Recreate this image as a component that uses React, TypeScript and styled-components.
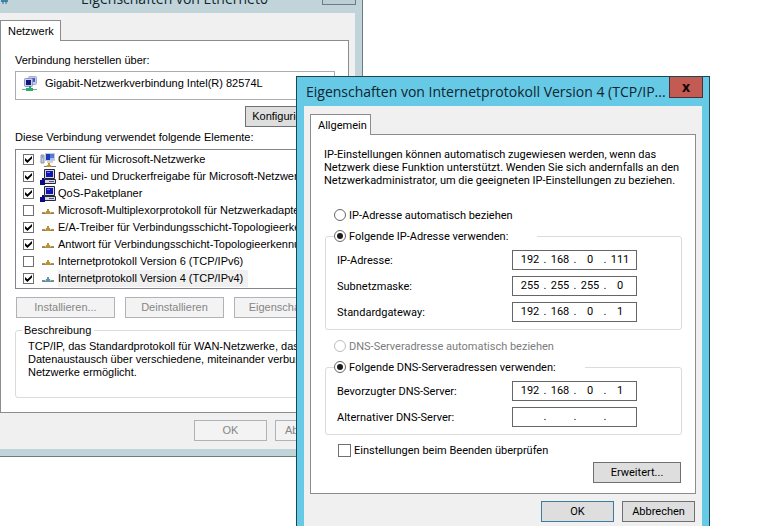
import React, { useId, useState } from "react";
import styled, { createGlobalStyle, css } from "styled-components";

const UI = '"Open Sans", "Noto Sans", sans-serif';
const DIALOG = 'Roboto, "DejaVu Sans", sans-serif';
const SANS = '"Liberation Sans", Arial, sans-serif';

const GlobalStyle = createGlobalStyle`
  *, *::before, *::after { box-sizing: border-box; }
  body { margin: 0; background: #fff; }
  button, input { font: inherit; color: inherit; margin: 0; }
`;

const Desktop = styled.main`
  position: relative;
  height: 100vh;
  overflow: hidden;
  background: #fff;
  color: #000;
`;

const Window = styled.section<{ $active?: boolean }>`
  position: absolute;
  border: 1px solid ${(p) => (p.$active ? "#1d4654" : "#6d7c82")};
  background: ${(p) => (p.$active ? "#66c9e6" : "#c0d4da")};
  padding: 0 7px 7px;
  font-size: 11px;
  line-height: 13px;
  ${(p) =>
    p.$active
      ? css`
          left: 296px;
          top: 76px;
          width: 414px;
          font-family: ${DIALOG};
        `
      : css`
          left: -14px;
          top: -17px;
          width: 377px;
          font-family: ${SANS};
        `}
`;

const TitleBar = styled.header`
  display: flex;
  align-items: flex-start;
  justify-content: space-between;
  height: 29px;
  margin-right: -1px;
  padding-left: 2px;
`;

const Title = styled.h1<{ $centered?: boolean }>`
  flex: 1;
  margin: 0;
  padding-left: ${(p) => (p.$centered ? 11 : 0)}px;
  white-space: nowrap;
  font: 400 14px/29px ${UI};
  color: #10252e;
  text-align: ${(p) => (p.$centered ? "center" : "left")};
`;

const CloseButton = styled.button<{ $active?: boolean }>`
  width: 34px;
  height: 21px;
  padding: 0;
  border: 1px solid ${(p) => (p.$active ? "#4f2f36" : "#6d7c82")};
  border-top: 0;
  background: ${(p) => (p.$active ? "#c35b52" : "#bdcfd5")};
  font: 700 14px/16px ${UI};
  color: #120808;
`;

const Client = styled.div<{ $bottom: number }>`
  background: #f0f0f0;
  padding: 8px 6px ${(p) => p.$bottom}px;
`;

const BackClient = styled(Client)`
  padding-top: 7px;
`;

const Tab = styled.button`
  position: relative;
  z-index: 1;
  display: block;
  height: 21px;
  margin-bottom: -1px;
  padding: 0 7px;
  width: 61px;
  border: 1px solid #8a8c90;
  border-bottom: 0;
  background: #fff;
  text-align: left;
  white-space: nowrap;
`;

const Pane = styled.div`
  display: flex;
  flex-direction: column;
  border: 1px solid #8a8c90;
  background: #fff;
  padding: 13px 13px 10px 13px;
`;

const BackPane = styled(Pane)`
  padding: 12px 13px 14px 14px;
`;

const Caption = styled.div<{ $top?: number }>`
  height: 15px;
  margin-top: ${(p) => p.$top ?? 0}px;
  line-height: 15px;
`;

const Paragraph = styled.p`
  margin: 0 0 20px;
  white-space: nowrap;
`;

const Button = styled.button<{ $w: number; $default?: boolean }>`
  flex: none;
  width: ${(p) => p.$w}px;
  height: 21px;
  padding: 0;
  border: 1px solid ${(p) => (p.$default ? "#3d7ba0" : "#707070")};
  background: #dedede;
  text-align: center;
  white-space: nowrap;
  &:disabled {
    border-color: #b0b2b5;
    background: #f3f3f3;
    color: #868686;
  }
`;

const ButtonRow = styled.div<{ $gap: number; $top: number; $start?: boolean }>`
  display: flex;
  justify-content: ${(p) => (p.$start ? "flex-start" : "flex-end")};
  gap: ${(p) => p.$gap}px;
  margin-top: ${(p) => p.$top}px;
  padding: 0 1px;
`;

const DeviceBox = styled.div`
  display: flex;
  align-items: center;
  gap: 7px;
  height: 29px;
  margin-top: 3px;
  padding: 0 6px 4px;
  border: 1px solid #a9acb0;
`;

const List = styled.ul`
  margin: 4px 0 0;
  padding: 1px 7px;
  border: 1px solid #82868c;
  list-style: none;
  overflow: hidden;
`;

const ListRow = styled.li`
  display: flex;
  align-items: center;
  height: 17px;
  white-space: nowrap;
`;

const RowLabel = styled.label<{ $selected?: boolean }>`
  display: flex;
  align-items: center;
  gap: 2px;
  height: 17px;
  margin-left: 6px;
  span {
    padding-right: 5px;
    line-height: 17px;
    background: ${(p) => (p.$selected ? "#f0f0f0" : "transparent")};
  }
`;

const Check = styled.input.attrs({ type: "checkbox" })<{ $size: number }>`
  appearance: none;
  flex: none;
  display: grid;
  place-items: center;
  width: ${(p) => p.$size}px;
  height: ${(p) => p.$size}px;
  border: 1px solid #707070;
  background: #fff;
  &:checked::after {
    content: "";
    width: 7px;
    height: 7px;
    background: #000;
    clip-path: polygon(0 30%, 35% 60%, 100% 0, 100% 36%, 35% 100%, 0 68%);
  }
`;

const Radio = styled.input.attrs({ type: "radio" })`
  appearance: none;
  flex: none;
  display: grid;
  place-items: center;
  width: 12px;
  height: 12px;
  border: 1px solid #666;
  border-radius: 50%;
  background: #fff;
  &:checked::after {
    content: "";
    width: 6px;
    height: 6px;
    border-radius: 50%;
    background: #1c1c1c;
  }
  &:disabled {
    border-color: #bcbcbc;
  }
`;

const Choice = styled.label<{ $left: number; $disabled?: boolean }>`
  display: flex;
  align-items: center;
  gap: 3px;
  height: 16px;
  margin-left: ${(p) => p.$left}px;
  color: ${(p) => (p.$disabled ? "#7c7c7c" : "inherit")};
  white-space: nowrap;
`;

const Group = styled.fieldset`
  min-width: 0;
  margin: 5px 0 0;
  padding: 0 8px 7px;
  border: 1px solid #d9dcdc;
  border-radius: 3px;
`;

const AddressGroup = styled(Group)`
  margin-left: 1px;
`;

const Legend = styled.legend<{ $w: number }>`
  width: ${(p) => p.$w}px;
  padding: 0;
`;

const Description = styled(Group)`
  padding: 3px 6px 18px 12px;
  legend {
    margin-left: -6px;
    padding: 0 3px 0 2px;
    line-height: 14px;
  }
  p {
    margin: 0;
    white-space: nowrap;
  }
`;

const Fields = styled.div`
  display: grid;
  gap: 6px;
  padding: 6px 0 0 3px;
`;

const Field = styled.div`
  display: grid;
  grid-template-columns: 175px 125px;
  align-items: center;
`;

const AddressBox = styled.div`
  display: flex;
  height: 20px;
  padding: 0 0 0 5px;
  border: 1px solid #666;
  background: #fff;
  line-height: 18px;
`;

const Octet = styled.input`
  width: 24px;
  height: 18px;
  padding: 0;
  border: 0;
  outline: 0;
  background: transparent;
  text-align: center;
`;

const Dot = styled.span`
  width: 6px;
  text-align: center;
`;

const Icon = styled.svg`
  display: block;
  flex: none;
`;

const AdapterIcon = () => (
  <Icon width="16" height="16" viewBox="0 0 16 16" aria-hidden="true">
    <rect x="6.5" y="0.5" width="8" height="8" rx="1" fill="#c3c9e6" stroke="#a3abd2" />
    <rect x="9" y="2" width="4" height="4" fill="#4a5cb4" />
    <rect x="2.5" y="2.5" width="8" height="8" rx="1" fill="#c9cfec" stroke="#8d96c4" />
    <rect x="4" y="4" width="5" height="5" fill="#14187c" />
    <path d="M7 10h2v4H7z" fill="#20a866" />
    <path d="M0 13.5h15" stroke="#7fa89a" />
    <path d="M4 12h7v3H4z" fill="#26b070" />
  </Icon>
);

const ClientIcon = () => (
  <Icon width="16" height="16" viewBox="0 0 16 16" aria-hidden="true">
    <path d="M1 3h3v8H1z" fill="#c3cadb" stroke="#8993aa" strokeWidth="1" />
    <path d="M2 5h1" stroke="#4659a5" />
    <rect x="5.5" y="1.5" width="9" height="7" fill="#a9bdf0" stroke="#c3cadb" />
    <path d="M6 2h4v6H6z" fill="#1b3bb8" />
    <path d="M10 2h4v4h-4z" fill="#5578dd" />
    <path d="M7 10h6" stroke="#9aa3b8" />
    <path d="M4 14.5h12" stroke="#7d7762" strokeWidth="1" />
    <path d="M6 15l1-2h4l1 2zM8 11h2v2H8z" fill="#c9963a" />
  </Icon>
);

const ServiceIcon = () => (
  <Icon width="16" height="16" viewBox="0 0 16 16" aria-hidden="true">
    <path d="M4.5 0.5h10v9h-10z" fill="#d5d7e4" stroke="#26263a" />
    <path d="M6 2h7v6H6z" fill="#1414b4" />
    <path d="M7 3h3v1H7z" fill="#6a78ee" />
    <path d="M3 10.5h12.5v4H3z" fill="#d5d7e4" stroke="#26263a" />
    <path d="M9 12.5h5" stroke="#55556a" />
    <path d="M0 11h5v5H0z" fill="#0a0a86" />
    <path d="M2 9h2v2H2z" fill="#0a0a86" />
  </Icon>
);

const ProtocolIcon = ({ tint }: { tint: string }) => (
  <Icon width="16" height="16" viewBox="0 0 16 16" aria-hidden="true">
    <path d="M2 10.5h12" stroke="#7f8378" />
    <path d="M2 9.5h3M11 9.5h3" stroke={tint} />
    <path d="M5 11l1-3h4l1 3z" fill={tint} />
    <path d="M7 6h2v3H7z" fill={tint} />
  </Icon>
);

const TitleIcon = () => (
  <Icon width="20" height="24" viewBox="0 0 20 24" aria-hidden="true">
    <path d="M5 15h7v3H5z" fill="#3f86a8" />
    <path d="M7 17v3M10 17v3" stroke="#2f6f92" strokeWidth="1" />
  </Icon>
);

type ElementRow = { name: string; on: boolean; icon: React.ReactNode; selected?: boolean };

const gold = "#bd9138";
const elements: ElementRow[] = [
  { name: "Client für Microsoft-Netzwerke", on: true, icon: <ClientIcon /> },
  { name: "Datei- und Druckerfreigabe für Microsoft-Netzwerke", on: true, icon: <ServiceIcon /> },
  { name: "QoS-Paketplaner", on: true, icon: <ServiceIcon /> },
  { name: "Microsoft-Multiplexorprotokoll für Netzwerkadapter", on: false, icon: <ProtocolIcon tint={gold} /> },
  { name: "E/A-Treiber für Verbindungsschicht-Topologieerkennung", on: true, icon: <ProtocolIcon tint={gold} /> },
  { name: "Antwort für Verbindungsschicht-Topologieerkennung", on: true, icon: <ProtocolIcon tint={gold} /> },
  { name: "Internetprotokoll Version 6 (TCP/IPv6)", on: false, icon: <ProtocolIcon tint={gold} /> },
  { name: "Internetprotokoll Version 4 (TCP/IPv4)", on: true, icon: <ProtocolIcon tint="#5f97ad" />, selected: true },
];

function ElementItem({ row }: { row: ElementRow }) {
  const id = useId();
  const [on, setOn] = useState(row.on);
  return (
    <ListRow>
      <Check id={id} $size={11} checked={on} onChange={() => setOn(!on)} />
      <RowLabel htmlFor={id} $selected={row.selected}>
        {row.icon}
        <span>{row.name}</span>
      </RowLabel>
    </ListRow>
  );
}

function AddressField({ label, value }: { label: string; value: string[] }) {
  const id = useId();
  return (
    <Field>
      <label htmlFor={id}>{label}</label>
      <AddressBox>
        {value.map((part, i) => (
          <React.Fragment key={i}>
            {i > 0 && <Dot>.</Dot>}
            <Octet
              id={i === 0 ? id : undefined}
              aria-label={i === 0 ? undefined : `${label} ${i + 1}`}
              defaultValue={part}
              maxLength={3}
            />
          </React.Fragment>
        ))}
      </AddressBox>
    </Field>
  );
}

function EthernetWindow() {
  return (
    <Window aria-label="Eigenschaften von Ethernet0">
      <TitleBar>
        <TitleIcon />
        <Title $centered>Eigenschaften von Ethernet0</Title>
        <CloseButton aria-label="Schließen" />
      </TitleBar>
      <BackClient $bottom={8}>
        <Tab>Netzwerk</Tab>
        <BackPane>
          <Caption>Verbindung herstellen über:</Caption>
          <DeviceBox>
            <AdapterIcon />
            <span>Gigabit-Netzwerkverbindung Intel(R) 82574L</span>
          </DeviceBox>
          <ButtonRow $gap={0} $top={6}>
            <Button $w={89}>Konfigurieren...</Button>
          </ButtonRow>
          <Caption $top={3}>Diese Verbindung verwendet folgende Elemente:</Caption>
          <List>
            {elements.map((row) => (
              <ElementItem key={row.name} row={row} />
            ))}
          </List>
          <ButtonRow $gap={10} $top={8} $start>
            <Button $w={99} disabled>Installieren...</Button>
            <Button $w={99} disabled>Deinstallieren</Button>
            <Button $w={99} disabled>Eigenschaften</Button>
          </ButtonRow>
          <Description>
            <legend>Beschreibung</legend>
            <p>
              TCP/IP, das Standardprotokoll für WAN-Netzwerke, das den
              <br />
              Datenaustausch über verschiedene, miteinander verbundene
              <br />
              Netzwerke ermöglicht.
            </p>
          </Description>
        </BackPane>
        <ButtonRow $gap={8} $top={7}>
          <Button $w={73} disabled>OK</Button>
          <Button $w={73} disabled>Abbrechen</Button>
        </ButtonRow>
      </BackClient>
    </Window>
  );
}

function ProtocolWindow() {
  return (
    <Window $active aria-label="Eigenschaften von Internetprotokoll Version 4">
      <TitleBar>
        <Title>Eigenschaften von Internetprotokoll Version 4 (TCP/IP...</Title>
        <CloseButton $active aria-label="Schließen">x</CloseButton>
      </TitleBar>
      <Client $bottom={10}>
        <Tab>Allgemein</Tab>
        <Pane>
          <Paragraph>
            IP-Einstellungen können automatisch zugewiesen werden, wenn das
            <br />
            Netzwerk diese Funktion unterstützt. Wenden Sie sich andernfalls an den
            <br />
            Netzwerkadministrator, um die geeigneten IP-Einstellungen zu beziehen.
          </Paragraph>
          <Choice $left={10}>
            <Radio name="ip" />
            IP-Adresse automatisch beziehen
          </Choice>
          <AddressGroup>
            <Legend $w={203}>
              <Choice $left={0}>
                <Radio name="ip" defaultChecked />
                Folgende IP-Adresse verwenden:
              </Choice>
            </Legend>
            <Fields>
              <AddressField label="IP-Adresse:" value={["192", "168", "0", "111"]} />
              <AddressField label="Subnetzmaske:" value={["255", "255", "255", "0"]} />
              <AddressField label="Standardgateway:" value={["192", "168", "0", "1"]} />
            </Fields>
          </AddressGroup>
          <ButtonRow $gap={0} $top={8} $start>
            <Choice $left={9} $disabled>
              <Radio name="dns" disabled />
              DNS-Serveradresse automatisch beziehen
            </Choice>
          </ButtonRow>
          <AddressGroup>
            <Legend $w={251}>
              <Choice $left={0}>
                <Radio name="dns" defaultChecked />
                Folgende DNS-Serveradressen verwenden:
              </Choice>
            </Legend>
            <Fields>
              <AddressField label="Bevorzugter DNS-Server:" value={["192", "168", "0", "1"]} />
              <AddressField label="Alternativer DNS-Server:" value={["", "", "", ""]} />
            </Fields>
          </AddressGroup>
          <ButtonRow $gap={0} $top={7} $start>
            <Choice $left={13}>
              <Check $size={13} />
              Einstellungen beim Beenden überprüfen
            </Choice>
          </ButtonRow>
          <ButtonRow $gap={0} $top={4}>
            <Button $w={88}>Erweitert...</Button>
          </ButtonRow>
        </Pane>
        <ButtonRow $gap={8} $top={7}>
          <Button $w={73} $default>OK</Button>
          <Button $w={73}>Abbrechen</Button>
        </ButtonRow>
      </Client>
    </Window>
  );
}

export default function App() {
  return (
    <>
      <GlobalStyle />
      <Desktop>
        <EthernetWindow />
        <ProtocolWindow />
      </Desktop>
    </>
  );
}
